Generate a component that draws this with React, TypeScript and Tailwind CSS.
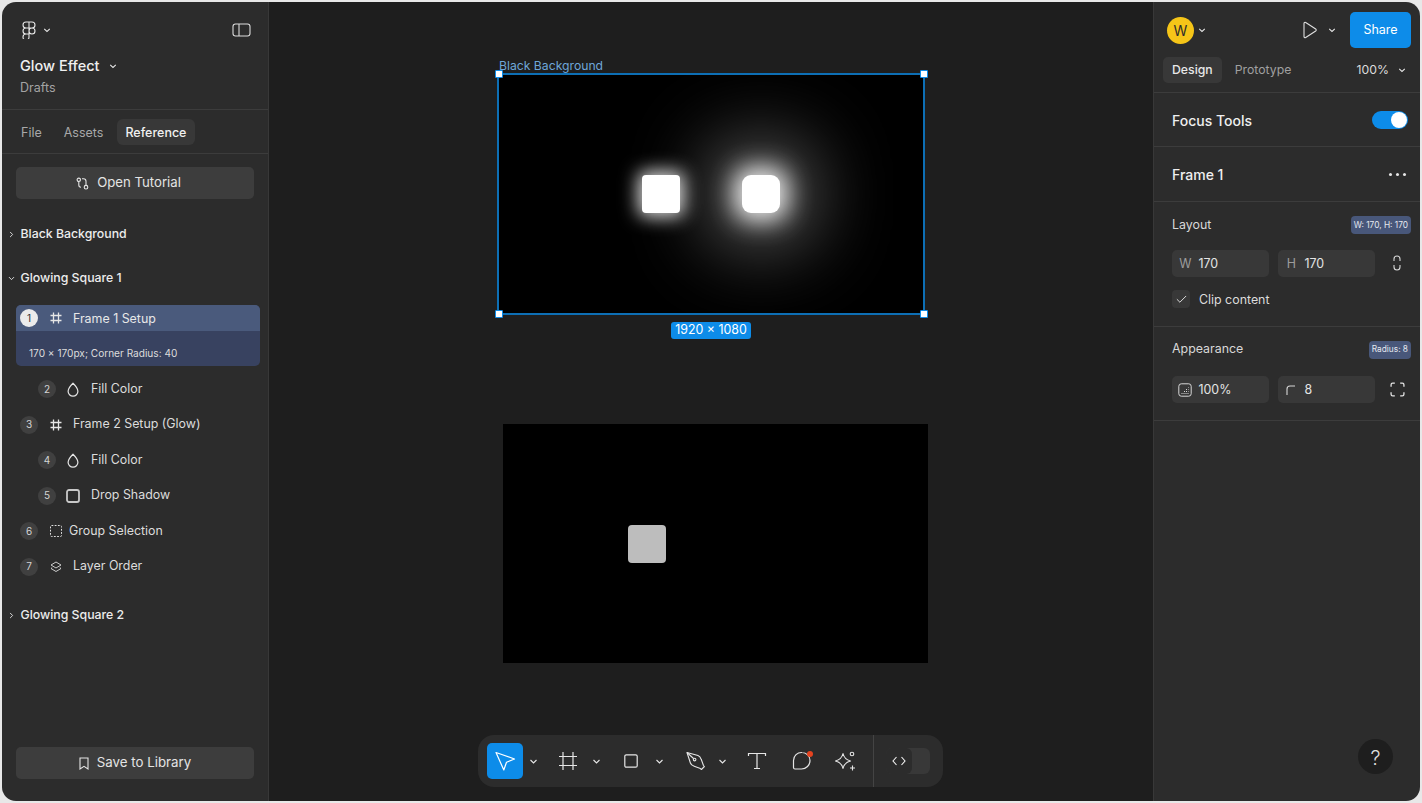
import React from "react";
import { ChevronDown, ChevronRight, Check } from "lucide-react";

const Chev = ({ cls = "" }: { cls?: string }) => (
  <svg width="8" height="8" viewBox="0 0 8 8" fill="none" className={cls}>
    <path d="M1.2 2.8 4 5.4l2.8-2.6" stroke="#e6e6e6" strokeWidth="1.1" />
  </svg>
);

const Hash = () => (
  <svg width="14" height="14" viewBox="0 0 14 14" fill="none" stroke="#e6e6e6" strokeWidth="1.3">
    <path d="M4.5 1.5v11M9.5 1.5v11M1.5 4.5h11M1.5 9.5h11" />
  </svg>
);

const Badge = ({ n, active = false }: { n: number; active?: boolean }) => (
  <span
    className={`flex h-[18px] w-[18px] shrink-0 items-center justify-center rounded-full text-[10px] ${
      active ? "bg-[#ebebeb] text-[#333333]" : "bg-[#404040] text-[#d4d4d4]"
    }`}
  >
    {n}
  </span>
);

const Row = ({
  n,
  indent = false,
  icon,
  label,
  gap = "ml-[9px]",
}: {
  n: number;
  indent?: boolean;
  icon: React.ReactNode;
  label: string;
  gap?: string;
}) => (
  <div className={`flex h-[35.5px] items-center text-[12.4px] text-[#dcdcdc] ${indent ? "pl-[36px]" : "pl-[18px]"}`}>
    <Badge n={n} />
    <span className={`flex w-[16px] shrink-0 items-center justify-center ${indent ? "ml-[9px]" : "ml-[10px]"}`}>{icon}</span>
    <span className={indent ? "ml-[10px]" : gap}>{label}</span>
  </div>
);

const SectionHead = ({ label, open = false }: { label: string; open?: boolean }) => (
  <div className="flex h-[20px] items-center pl-[5px] text-[12.3px] font-medium text-[#ededed]">
    {open ? <ChevronDown size={9} strokeWidth={2.4} color="#e6e6e6" /> : <ChevronRight size={9} strokeWidth={2.4} color="#e6e6e6" />}
    <span className="ml-[4.5px]">{label}</span>
  </div>
);

const Drop = () => (
  <svg width="12" height="15" viewBox="0 0 12 15" fill="none" stroke="#e6e6e6" strokeWidth="1.2" strokeLinejoin="round">
    <path d="M6 1.2C6 1.2 10.9 6 10.900 9.300a4.900 4.900 0 0 1-9.800 0C1.100 6 6 1.200 6 1.200z" />
  </svg>
);

const LeftPanel = () => (
  <aside className="flex w-[267px] shrink-0 flex-col border-r border-[#383838] bg-[#2c2c2c]">
    <div className="h-[108px] border-b border-[#3c3c3c] pl-[18px] pr-[17px] pt-[18px]">
      <div className="flex h-[20px] items-center justify-between">
        <div className="flex items-center gap-[7px] pl-[2px]">
          <svg width="14" height="18" viewBox="0 0 14 18" fill="none" stroke="#e6e6e6" strokeWidth="1.1">
            <path d="M7 1H4a3 3 0 0 0 0 6h3zM7 1h3a3 3 0 0 1 0 6H7zM7 7H4a3 3 0 0 0 0 6h3zM7 10a3 3 0 1 0 6 0 3 3 0 0 0-6 0zM7 13H4a3 3 0 1 0 3 3z" />
          </svg>
          <Chev />
        </div>
        <svg width="19" height="14" viewBox="0 0 19 14" fill="none" stroke="#dcdcdc" strokeWidth="1.1">
          <rect x="1" y="1" width="17" height="12" rx="2.5" />
          <path d="M7 1v12" />
        </svg>
      </div>
      <div className="mt-[15px] flex items-center text-[14.5px] font-medium leading-[22px] text-[#f0f0f0]">
        Glow Effect
        <Chev cls="ml-[9px]" />
      </div>
      <div className="mt-[2px] text-[12.5px] leading-[18px] text-[#a3a3a3]">Drafts</div>
    </div>

    <div className="flex h-[44px] items-start gap-[4px] border-b border-[#3c3c3c] px-[10px] pt-[9px] text-[12.5px]">
      <span className="flex h-[26px] items-center px-[9px] pt-[2px] text-[#a8a8a8]">File</span>
      <span className="flex h-[26px] items-center px-[9px] pt-[2px] text-[#a8a8a8]">Assets</span>
      <span className="ml-[1px] flex h-[26px] items-center rounded-[6px] bg-[#383838] pl-[8px] pr-[9px] pt-[2px] font-medium text-[#f0f0f0]">Reference</span>
    </div>

    <div className="flex flex-1 flex-col">
      <button className="mx-[14px] mt-[13px] flex h-[32px] items-center justify-center gap-[8px] rounded-[5px] bg-[#3d3d3d] pr-[13px] text-[13.2px] text-[#e4e4e4]">
        <svg width="13" height="13" viewBox="0 0 13 13" fill="none" stroke="#e6e6e6" strokeWidth="1.1">
          <circle cx="2.8" cy="2.8" r="1.7" />
          <circle cx="10" cy="10.2" r="1.8" />
          <path d="M2.800 4.500V8q0 2.200 2.200 2.200M6 1.800h1.500q2.500 0 2.500 2.500v4.100" />
        </svg>
        Open Tutorial
      </button>

      <div className="mt-[25.5px]">
        <SectionHead label="Black Background" />
      </div>
      <div className="mt-[24px]">
        <SectionHead label="Glowing Square 1" open />
      </div>

      <div className="mx-[14px] mt-[16.5px] w-[244px] overflow-hidden rounded-[5px] bg-[#384260]">
        <div className="flex h-[26px] items-center bg-[#4a5a7c] pl-[4px] text-[12.4px] text-[#e8e8e8]">
          <Badge n={1} active />
          <span className="ml-[10px] flex w-[16px] items-center justify-center">
            <Hash />
          </span>
          <span className="ml-[9px] pt-[2px]">Frame 1 Setup</span>
        </div>
        <div className="flex h-[35px] items-center pl-[13px] pt-[10px] text-[10.1px] text-[#dcdcdc]">170 × 170px; Corner Radius: 40</div>
      </div>

      <div className="mt-[5.5px]">
        <Row n={2} indent icon={<Drop />} label="Fill Color" />
        <Row n={3} icon={<Hash />} label="Frame 2 Setup (Glow)" />
        <Row n={4} indent icon={<Drop />} label="Fill Color" />
        <Row
          n={5}
          indent
          icon={
            <svg width="14" height="14" viewBox="0 0 14 14" fill="none">
              <rect x="1" y="1" width="12" height="12" rx="2" stroke="#c8c8c8" strokeWidth="1.8" />
            </svg>
          }
          label="Drop Shadow"
        />
        <Row
          n={6}
          icon={
            <svg width="12" height="12" viewBox="0 0 12 12" fill="none">
              <rect x="0.5" y="0.5" width="11" height="11" rx="1" stroke="#e0e0e0" strokeWidth="1" strokeDasharray="1.8 1.4" />
            </svg>
          }
          label="Group Selection"
          gap="ml-[5px]"
        />
        <Row
          n={7}
          icon={
            <svg width="12" height="12" viewBox="0 0 12 12" fill="none" stroke="#dcdcdc" strokeWidth="0.9">
              <path d="M6 1 11 4 6 7 1 4z" />
              <path d="M2.2 6.6 1 7.5 6 10.5l5-3-1.2-.9" />
            </svg>
          }
          label="Layer Order"
        />
      </div>

      <div className="mt-[21px]">
        <SectionHead label="Glowing Square 2" />
      </div>

      <button className="mx-[14px] mb-[22px] mt-auto flex h-[32px] items-center justify-center gap-[8px] rounded-[5px] bg-[#3d3d3d] text-[13.3px] text-[#e4e4e4]">
        <svg width="10" height="13" viewBox="0 0 10 13" fill="none" stroke="#e6e6e6" strokeWidth="1.1">
          <path d="M1 1h8v11L5 9.4 1 12z" />
        </svg>
        Save to Library
      </button>
    </div>
  </aside>
);

const Handle = ({ pos }: { pos: string }) => <span className={`absolute h-[8px] w-[8px] rounded-[1px] border border-[#0d8ce9] bg-white ${pos}`} />;

const ToolChev = ({ cls = "" }: { cls?: string }) => (
  <svg width="9" height="9" viewBox="0 0 9 9" fill="none" className={cls}>
    <path d="M1.5 3 4.500 6l3-3" stroke="#e6e6e6" strokeWidth="1.1" />
  </svg>
);

const Toolbar = () => (
  <div className="absolute left-[209px] top-[733px] flex h-[52px] w-[465px] items-center rounded-[16px] bg-[#2c2c2c] pl-[9px]">
    <span className="flex h-[36px] w-[36px] items-center justify-center rounded-[5px] bg-[#0d8ce9]">
      <svg width="22" height="22" viewBox="0 0 22 22" fill="none" stroke="white" strokeWidth="1.2" strokeLinejoin="round">
        <path d="M2 2.500 20.500 9l-8 3.200L9.800 20z" />
      </svg>
    </span>
    <ToolChev cls="ml-[6px]" />
    <svg className="ml-[20px]" width="20" height="20" viewBox="0 0 20 20" fill="none" stroke="#e6e6e6" strokeWidth="1.2">
      <path d="M5 1v18M15 1v18M1 5.500h18M1 14.500h18" />
    </svg>
    <ToolChev cls="ml-[14px]" />
    <svg className="ml-[23px]" width="14" height="14" viewBox="0 0 14 14" fill="none" stroke="#e6e6e6" strokeWidth="1.2">
      <rect x="0.8" y="0.8" width="12.4" height="12.4" rx="1.5" />
    </svg>
    <ToolChev cls="ml-[17px]" />
    <svg className="ml-[22px]" width="20" height="20" viewBox="0 0 20 20" fill="none" stroke="#e6e6e6" strokeWidth="1.1" strokeLinejoin="round">
      <path d="M1 1.500 12 4.500c1.500.5 2.600 2 3.200 3.800l2.300 6.200.9 1-3 3-1-.9-6.200-2.300C6.400 14.700 4.900 13.600 4.400 12L1 1.500z" />
      <circle cx="8.600" cy="8.600" r="1.300" />
      <path d="M1 1.500l6.500 6" />
    </svg>
    <ToolChev cls="ml-[12px]" />
    <svg className="ml-[20px]" width="20" height="20" viewBox="0 0 20 20" fill="none" stroke="#e6e6e6" strokeWidth="1.2">
      <path d="M1.500 5V2.500h17V5M10 2.500v15M7 17.500h6" />
    </svg>
    <span className="relative ml-[25px] block h-[20px] w-[20px]">
      <svg width="20" height="20" viewBox="0 0 20 20" fill="none" stroke="#e6e6e6" strokeWidth="1.2">
        <path d="M10 1.500a8 8 0 0 1 8 8v0a8.500 8.500 0 0 1-8.500 8.500H3a1.500 1.500 0 0 1-1.500-1.500V9.500a8 8 0 0 1 8.500-8z" />
      </svg>
      <span className="absolute right-[-1px] top-0 h-[6px] w-[6px] rounded-full bg-[#e5431f]" />
    </span>
    <svg className="ml-[23px]" width="22" height="22" viewBox="0 0 22 22" fill="none" stroke="#e6e6e6" strokeWidth="1.1" strokeLinejoin="round">
      <path d="M8 3.500c.9 4 3.400 6.500 7.500 7.500-4.100 1-6.600 3.500-7.500 7.500-.9-4-3.400-6.500-7.500-7.500 4.100-1 6.600-3.500 7.500-7.500z" />
      <circle cx="17" cy="4" r="1.800" />
      <path d="M17.500 15.500v5M15 18h5" />
    </svg>
    <span className="ml-[16px] h-[52px] w-px bg-[#444444]" />
    <span className="ml-[12px] flex h-[26px] w-[44px] rounded-[6px] bg-[#383838]">
      <span className="flex h-[26px] w-[26px] items-center justify-center rounded-[6px] bg-[#2c2c2c]">
        <svg width="14" height="10" viewBox="0 0 14 10" fill="none" stroke="#f0f0f0" strokeWidth="1.1">
          <path d="M4.500 1 1 5l3.500 4M9.500 1 13 5 9.500 9" />
        </svg>
      </span>
    </span>
  </div>
);

const Canvas = () => (
  <main className="relative flex-1 bg-[#1e1e1e]">
    <span className="absolute left-[230px] top-[55px] text-[12.2px] leading-[18px] text-[#6ea6d8]">Black Background</span>
    <div className="absolute left-[228px] top-[71px] h-[242px] w-[428px] overflow-hidden border-2 border-[#0d6fb5] bg-black">
      <div className="absolute left-[143px] top-[100px] h-[38px] w-[38px] rounded-[4px] bg-white shadow-[0_0_18px_4px_rgba(255,255,255,0.85)]" />
      <div className="absolute left-[243px] top-[100px] h-[38px] w-[38px] rounded-[9px] bg-white shadow-[0_0_24px_8px_rgba(255,255,255,0.9),0_0_80px_30px_rgba(255,255,255,0.42)]" />
    </div>
    <Handle pos="left-[226px] top-[68px]" />
    <Handle pos="left-[651px] top-[68px]" />
    <Handle pos="left-[226px] top-[308px]" />
    <Handle pos="left-[651px] top-[308px]" />
    <span className="absolute left-[402px] top-[320px] flex h-[17px] w-[80px] items-center justify-center rounded-[3px] bg-[#0d8ce9] text-[12.4px] text-white">1920 × 1080</span>

    <div className="absolute left-[234px] top-[422px] h-[239px] w-[425px] bg-black">
      <div className="absolute left-[125px] top-[101px] h-[38px] w-[38px] rounded-[4px] bg-[#bdbdbd]" />
    </div>
    <Toolbar />
  </main>
);

const Tag = ({ children }: { children: React.ReactNode }) => (
  <span className="flex h-[18px] items-center rounded-[4px] bg-[#48577a] px-[3px] text-[8.3px] text-[#e6e9ef]">{children}</span>
);

const Field = ({ icon, value }: { icon: React.ReactNode; value: string }) => (
  <div className="flex h-[26.5px] w-[97px] items-center rounded-[5px] bg-[#383838] pt-[2px] text-[12.4px] text-[#e4e4e4]">
    <span className="flex w-[26.5px] shrink-0 items-center justify-center">{icon}</span>
    {value}
  </div>
);

const RightPanel = () => (
  <aside className="relative flex w-[267px] shrink-0 flex-col border-l border-[#383838] bg-[#2c2c2c]">
    <div className="h-[91px] border-b border-[#3c3c3c]">
      <div className="flex h-[46px] items-center pl-[13px] pr-[9px] pt-[10px]">
        <span className="flex h-[27px] w-[27px] items-center justify-center rounded-full bg-[#f5c518] text-[14px] text-[#2c2c2c]">W</span>
        <Chev cls="ml-[4px]" />
        <svg className="ml-auto" width="16" height="18" viewBox="0 0 16 18" fill="none" stroke="#e0e0e0" strokeWidth="1.1" strokeLinejoin="round">
          <path d="M2 2.500c0-1 .9-1.500 1.700-1l10 6.500c.7.500.7 1.500 0 2l-10 6.500c-.8.500-1.700 0-1.700-1z" />
        </svg>
        <Chev cls="ml-[10px]" />
        <button className="ml-[14px] flex h-[36px] w-[61px] items-center justify-center rounded-[5px] bg-[#0d8ce9] text-[12.5px] text-white">Share</button>
      </div>
      <div className="mt-[9px] flex h-[26px] items-center pl-[9px] pr-[14px] text-[12.25px]">
        <span className="flex h-[26px] items-center rounded-[5px] bg-[#383838] px-[9px] font-medium text-[#e8e8e8]">Design</span>
        <span className="ml-[4px] px-[9px] text-[#a0a0a0]">Prototype</span>
        <span className="ml-auto text-[#dcdcdc]">100%</span>
        <Chev cls="ml-[9px]" />
      </div>
    </div>

    <div className="flex h-[54px] items-center justify-between border-b border-[#3c3c3c] pl-[18px] pr-[12px]">
      <span className="pt-[1px] text-[14px] font-medium text-[#efefef]">Focus Tools</span>
      <span className="flex h-[18px] w-[36px] items-center justify-end rounded-full bg-[#0d8ce9] pr-[1px]">
        <span className="h-[16px] w-[16px] rounded-full bg-white" />
      </span>
    </div>

    <div className="flex h-[55px] items-center justify-between border-b border-[#3c3c3c] pl-[18px] pr-[14px]">
      <span className="text-[14px] font-medium text-[#efefef]">Frame 1</span>
      <span className="flex gap-[4px]">
        <i className="h-[3px] w-[3px] rounded-full bg-[#e6e6e6]" />
        <i className="h-[3px] w-[3px] rounded-full bg-[#e6e6e6]" />
        <i className="h-[3px] w-[3px] rounded-full bg-[#e6e6e6]" />
      </span>
    </div>

    <div className="h-[125px] border-b border-[#3c3c3c] pl-[18px] pr-[9px] pt-[14px]">
      <div className="flex h-[18px] items-center justify-between text-[12.4px] text-[#d8d8d8]">
        Layout
        <Tag>W: 170, H: 170</Tag>
      </div>
      <div className="mt-[16px] flex items-center gap-[9px]">
        <Field icon={<span className="text-[#9c9c9c]">W</span>} value="170" />
        <Field icon={<span className="text-[#9c9c9c]">H</span>} value="170" />
        <svg className="ml-[9px]" width="8" height="16" viewBox="0 0 8 16" fill="none" stroke="#d8d8d8" strokeWidth="1.1">
          <path d="M1 6V4a3 3 0 0 1 6 0v2M1 10v2a3 3 0 0 0 6 0v-2" />
        </svg>
      </div>
      <div className="mt-[13px] flex items-center text-[12.4px] text-[#dcdcdc]">
        <span className="flex h-[18px] w-[18px] items-center justify-center rounded-[4px] bg-[#383838]">
          <Check size={13} strokeWidth={1.6} color="#f2f2f2" />
        </span>
        <span className="ml-[9px] pt-[1px]">Clip content</span>
      </div>
    </div>

    <div className="h-[94px] border-b border-[#3c3c3c] pl-[18px] pr-[9px] pt-[13px]">
      <div className="flex h-[18px] items-center justify-between pt-[1px] text-[12.4px] text-[#d8d8d8]">
        Appearance
        <Tag>Radius: 8</Tag>
      </div>
      <div className="mt-[18px] flex items-center gap-[9px]">
        <Field
          icon={
            <svg width="14" height="14" viewBox="0 0 14 14" fill="none">
              <rect x="0.8" y="0.8" width="12.4" height="12.4" rx="2.5" stroke="#d8d8d8" strokeWidth="1" />
              <path d="M3.500 10.500h7M6 8.500h4.500M8 6.500h2.500M10 4.500h.5" stroke="#d8d8d8" strokeWidth="1" strokeDasharray="1 1" />
            </svg>
          }
          value="100%"
        />
        <Field
          icon={
            <svg width="10" height="10" viewBox="0 0 10 10" fill="none" stroke="#d8d8d8" strokeWidth="1.1">
              <path d="M1 10V4a3 3 0 0 1 3-3h5" />
            </svg>
          }
          value="8"
        />
        <svg className="ml-[6px]" width="15" height="15" viewBox="0 0 14 14" fill="none" stroke="#e6e6e6" strokeWidth="1.2">
          <path d="M1 4.500V2.500A1.500 1.500 0 0 1 2.500 1h2M9.500 1h2A1.500 1.500 0 0 1 13 2.500v2M13 9.500v2a1.500 1.500 0 0 1-1.500 1.500h-2M4.500 13h-2A1.500 1.500 0 0 1 1 11.500v-2" />
        </svg>
      </div>
    </div>

    <span className="absolute bottom-[27px] right-[27px] flex h-[35px] w-[35px] items-center justify-center rounded-full bg-[#1e1e1e] pt-[2px] text-[20px] font-light text-[#dcdcdc]">?</span>
  </aside>
);

export default function App() {
  return (
    <div className="h-[803px] w-[1422px] overflow-hidden bg-[#e8e8e8] p-[2px] [font-family:Inter,'Noto_Sans',sans-serif]">
      <div className="flex h-[799px] w-[1418px] overflow-hidden rounded-[14px]">
        <LeftPanel />
        <Canvas />
        <RightPanel />
      </div>
    </div>
  );
}
